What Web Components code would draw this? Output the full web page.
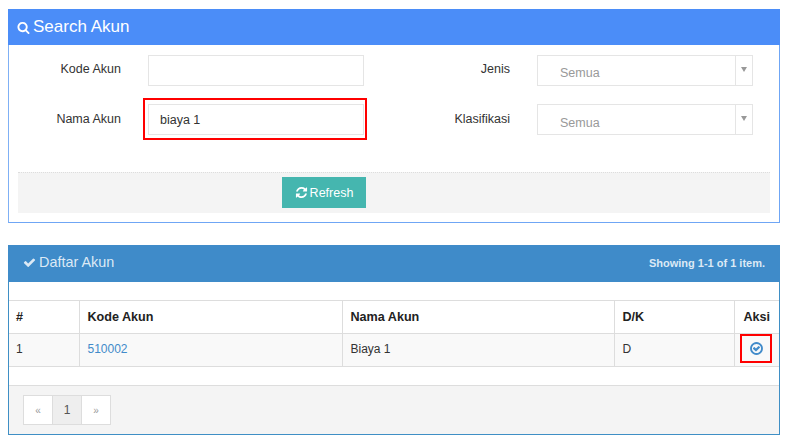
<!DOCTYPE html>
<html><head><meta charset="utf-8">
<style>
html,body{margin:0;background:#fff}
body{padding:9px 9px 0 8px;font:12.5px "Liberation Sans",Arial,sans-serif;color:#333;display:flex;flex-direction:column;gap:22px;width:772px}
</style></head><body>
<search-panel></search-panel>
<list-panel></list-panel>
<script>
const I={
search:'M1216 832q0-185-131.5-316.5t-316.5-131.5-316.5 131.5-131.5 316.5 131.5 316.5 316.5 131.5 316.5-131.5 131.5-316.5zm512 832q0 52-38 90t-90 38q-54 0-90-38l-343-342q-179 124-399 124-143 0-273.5-55.5t-225-150-150-225-55.5-273.5 55.5-273.5 150-225 225-150 273.5-55.5 273.5 55.5 225 150 150 225 55.5 273.5q0 220-124 399l343 343q37 37 37 90z',
refresh:'M1639 1056q0 5-1 7-64 268-268 434.5t-478 166.5q-146 0-282.5-55t-243.5-157l-129 129q-19 19-45 19t-45-19-19-45v-448q0-26 19-45t45-19h448q26 0 45 19t19 45-19 45l-137 137q71 66 161 102t187 36q134 0 250-65t186-179q11-17 53-117 8-23 30-23h192q13 0 22.5 9.5t9.5 22.5zm25-800v448q0 26-19 45t-45 19h-448q-26 0-45-19t-19-45 19-45l138-138q-148-137-349-137-134 0-250 65t-186 179q-11 17-53 117-8 23-30 23h-199q-13 0-22.5-9.5t-9.5-22.5v-7q65-268 270-434.5t480-166.5q146 0 284 55.5t245 156.5l130-129q19-19 45-19t45 19 19 45z',
check:'M1671 566q0 40-28 68l-724 724-136 136q-28 28-68 28t-68-28l-136-136-362-362q-28-28-28-68t28-68l136-136q28-28 68-28t68 28l294 295 656-657q28-28 68-28t68 28l136 136q28 28 28 68z',
circle:'M1299 813l-422 422q-19 19-45 19t-45-19l-294-294q-19-19-19-45t19-45l102-102q19-19 45-19t45 19l147 147 275-275q19-19 45-19t45 19l102 102q19 19 19 45t-19 45zm141 83q0-148-73-273t-198-198-273-73-273 73-198 198-73 273 73 273 198 198 273 73 273-73 198-198 73-273zm224 0q0 209-103 385.5t-279.5 279.5-385.5 103-385.5-103-279.5-279.5-103-385.5 103-385.5 279.5-279.5 385.5-103 385.5 103 279.5 279.5 103 385.5z'};
const svg=(n,s)=>`<svg width="${s}" height="${s}" viewBox="0 0 1792 1792" fill="currentColor" style="display:block;flex:none"><path d="${I[n]}"/></svg>`;
class Base extends HTMLElement{
  constructor(){super();this.attachShadow({mode:'open'}).innerHTML=this.html()}
}
customElements.define('text-field',class extends Base{html(){return `<style>
:host{display:block;position:relative;box-sizing:border-box;width:216px;height:31px;border:1px solid #e5e5e5;background:#fff;font-size:12.5px;color:#333}
.v{padding:0 11px;line-height:28px;padding-top:1px}
.mark{position:absolute;inset:-7px -4px -6px -6px;border:2px solid #f00;pointer-events:none}
</style><div class="v"><slot></slot></div>${this.hasAttribute('marked')?'<div class="mark"></div>':''}`}});
customElements.define('select-field',class extends Base{html(){return `<style>
:host{display:flex;box-sizing:border-box;width:216px;height:31px;border:1px solid #e5e5e5;background:#fff;font-size:12.5px;color:#999}
.v{flex:1;padding:var(--pt,2px) 22px 0;line-height:30px;overflow:hidden}
.a{width:17px;border-left:1px solid #e5e5e5;display:flex;justify-content:center;padding-top:11px;box-sizing:border-box}
i{display:block;width:0;height:0;border:3px solid transparent;border-top:5px solid #999;border-bottom:0}
</style><div class="v"><slot></slot></div><div class="a"><i></i></div>`}});
customElements.define('search-panel',class extends Base{html(){return `<style>
:host{display:block;box-sizing:border-box;height:214px;border:1px solid #6fa6f5;border-top:0;border-left-color:#7fb0f5}
header{background:#4b8df8;color:#fff;height:36px;display:flex;align-items:center;margin:0 -1px;padding-left:9px;gap:3px;font-size:17px}
header svg{margin-top:1px}
.form{display:grid;grid-template-columns:112px 216px 146px 27px 216px;row-gap:18px;padding:10px 0 0 27px;height:117px;box-sizing:border-box;grid-auto-rows:31px}
label{font-size:12.5px;text-align:right;line-height:28px;white-space:nowrap;padding-right:27px}
.r2{line-height:30px}
.f{grid-column:2}.l2{grid-column:3/5;padding-right:27px}
.foot{margin:10px 9px 0 9px;height:41px;box-sizing:border-box;background:#f4f4f4;border-top:1px dotted #ddd;padding-top:4px;padding-left:264px}
button{all:unset;box-sizing:border-box;display:flex;align-items:center;justify-content:center;gap:2px;width:84px;height:31px;background:#45b6af;color:#fff;font:12.5px "Liberation Sans",Arial,sans-serif}
</style>
<header>${svg('search',13)}<span>Search Akun</span></header>
<div class="form">
<label style="grid-column:1">Kode Akun</label><text-field class="f"></text-field><label class="l2">Jenis</label><select-field>Semua</select-field>
<label class="r2" style="grid-column:1">Nama Akun</label><text-field class="f" marked>biaya 1</text-field><label class="l2 r2">Klasifikasi</label><select-field style="--pt:3px">Semua</select-field>
</div>
<div class="foot"><button>${svg('refresh',13)}<span>Refresh</span></button></div>`}});
customElements.define('account-table',class extends Base{html(){return `<style>
:host{display:block;font-size:12px}
table{border-collapse:collapse;width:100%;table-layout:fixed}
th,td{border:1px solid #ddd;padding:0 8px;text-align:left;height:33px;box-sizing:border-box;color:#333}
th{font-size:12.6px;font-weight:700;color:#222}
td{background:#f9f9f9;padding-bottom:2px}
th:first-child,td:first-child{border-left:0;padding-left:7px}
th:last-child{border-right:0;text-align:center;padding:0}
td:last-child{border-right:0;text-align:center;padding:0 0 4px}
a{color:#428bca;text-decoration:none}
.ic{position:relative;display:inline-flex;vertical-align:middle;color:#428bca}
.mark{position:absolute;left:-9px;top:-7px;width:32px;height:29px;box-sizing:border-box;border:2px solid #f00;pointer-events:none}
</style><table><colgroup><col style="width:70px"><col style="width:263px"><col style="width:272px"><col style="width:120px"><col></colgroup>
<tr><th>#</th><th>Kode Akun</th><th>Nama Akun</th><th>D/K</th><th>Aksi</th></tr>
<tr><td>1</td><td><a href="#">510002</a></td><td>Biaya 1</td><td>D</td><td><span class="ic">${svg('circle',15)}<span class="mark"></span></span></td></tr>
</table>`}});
customElements.define('page-nav',class extends Base{html(){return `<style>
:host{display:flex;font-size:12px}
span{box-sizing:border-box;width:30px;height:30px;border:1px solid #ddd;background:#fff;color:#999;display:flex;align-items:center;justify-content:center;margin-left:-1px}
span:first-child{margin-left:0}
.on{background:#eee;color:#555}
.s{font-size:10px}
</style><span class="s">«</span><span class="on">1</span><span class="s">»</span>`}});
customElements.define('list-panel',class extends Base{html(){return `<style>
:host{display:block;box-sizing:border-box;height:190px;border:1px solid #3f8fc5;border-top:0}
header{background:#3f8bc9;color:#dce9f5;height:37px;display:flex;align-items:center;margin:0 -1px;padding:0 15px 3px;box-sizing:border-box;gap:3px;font-size:14.4px}
header small{margin-left:auto;margin-top:2px;font-size:11px;font-weight:700}
.t{margin-top:18px}
.foot{margin-top:18px;background:#f4f4f4;border-top:1px solid #ddd;height:49px;box-sizing:border-box;padding:9px 0 0 15px}
</style>
<header>${svg('check',13)}<span>Daftar Akun</span><small>Showing 1-1 of 1 item.</small></header>
<account-table class="t"></account-table>
<div class="foot"><page-nav></page-nav></div>`}});
</script>
</body></html>
